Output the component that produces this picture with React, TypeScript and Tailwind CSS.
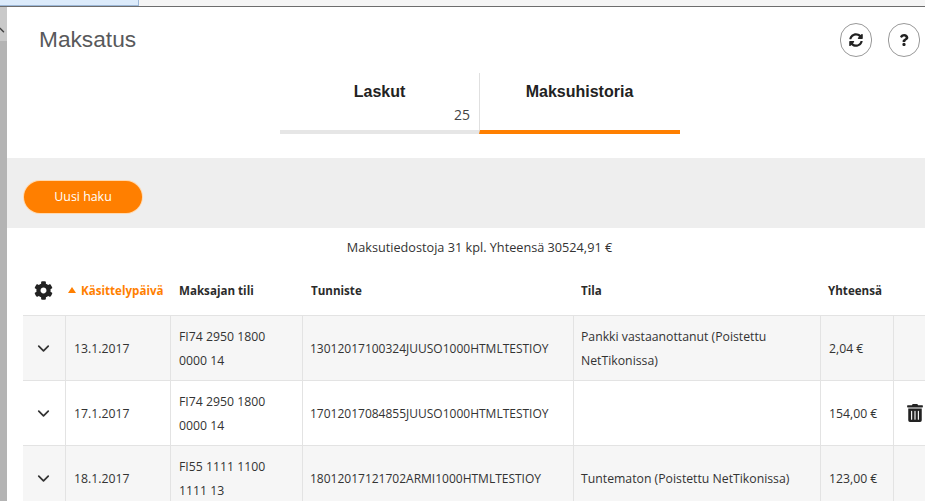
import { ChevronDown } from "lucide-react";
import { FaCog, FaQuestion, FaSyncAlt, FaTrashAlt } from "react-icons/fa";

const rows = [
  { date: "13.1.2017", account: ["FI74 2950 1800", "0000 14"], id: "13012017100324JUUSO1000HTMLTESTIOY", state: "Pankki vastaanottanut (Poistettu NetTikonissa)", sum: "2,04 €", trash: false },
  { date: "17.1.2017", account: ["FI74 2950 1800", "0000 14"], id: "17012017084855JUUSO1000HTMLTESTIOY", state: "", sum: "154,00 €", trash: true },
  { date: "18.1.2017", account: ["FI55 1111 1100", "1111 13"], id: "18012017121702ARMI1000HTMLTESTIOY", state: "Tuntematon (Poistettu NetTikonissa)", sum: "123,00 €", trash: false },
];

const cols = "grid grid-cols-[42px_105px_132px_271px_247px_73px_32px]";

export default function App() {
  return (
    <div className="flex h-[501px] w-[925px] flex-col overflow-hidden bg-white font-['Open_Sans',sans-serif] text-[#333]">
      <div className="h-[7px] shrink-0 border-b border-[#6d6d6d] bg-[#f5f5f5]">
        <div className="h-[6px] w-[139px] border-r border-b border-[#9db8d8] bg-[#dcebfb]" />
      </div>
      <div className="flex min-h-0 flex-1">
        <div className="w-[7px] shrink-0 bg-[#b4b4b4]">
          <div className="h-[34px] overflow-hidden bg-[#c9c9c9]">
            <ChevronDown className="relative -left-[7px] top-[16px] rotate-180 text-[#444]" size={14} strokeWidth={2.5} />
          </div>
        </div>
        <div className="min-w-0 flex-1">
          <div className="flex h-[66px] items-start justify-between pt-[16px] pr-[5px] pl-[32px]">
            <h1 className="font-['Liberation_Sans',sans-serif] text-[22.7px] leading-[32px] text-[#58595b]">Maksatus</h1>
            <div className="flex gap-[16px]">
              <button className="flex h-[34px] w-[32px] items-center justify-center rounded-full border border-[#999] text-[#222]">
                <FaSyncAlt size={14} />
              </button>
              <button className="flex h-[34px] w-[32px] items-center justify-center rounded-full border border-[#999] text-[#222]">
                <FaQuestion size={12} />
              </button>
            </div>
          </div>

          <div className="ml-[273px] flex h-[61px] w-[400px] font-['Liberation_Sans',sans-serif]">
            <div className="w-[199px] border-b-[4px] border-[#e6e6e6] pt-[10px]">
              <div className="text-center text-[16px] leading-[18px] font-bold text-[#222]">Laskut</div>
              <div className="mt-[4px] pr-[9px] text-right font-['Open_Sans',sans-serif] text-[14px] leading-[19px] text-[#444]">25</div>
            </div>
            <div className="w-[201px] border-b-[4px] border-l border-[#ff7f00] border-l-[#e0e0e0] pt-[10px]">
              <div className="pr-[1px] text-center text-[16px] leading-[18px] font-bold text-[#222]">Maksuhistoria</div>
            </div>
          </div>

          <div className="mt-[24px] flex h-[70px] items-start bg-[#eeeeee] pt-[23px] pl-[17px]">
            <button className="h-[32px] w-[118px] rounded-full bg-[#ff7f00] text-[12.4px] text-white shadow-[0_0_0_1px_#ffd9b0]">Uusi haku</button>
          </div>

          <div className="pt-[10px] pl-[27px] text-center text-[12.7px] leading-[19px] text-[#333]">Maksutiedostoja 31 kpl. Yhteensä 30524,91 €</div>

          <div className="mt-[14px] ml-[16px]">
            <div className={`${cols} h-[45px] items-center border-b border-[#e3e3e3] pb-[5px] text-[11.6px] font-bold text-[#2b2b2b]`}>
              <div className="flex justify-center pr-[1px]">
                <FaCog size={19} className="text-[#222]" />
              </div>
              <div className="flex items-center gap-[5px] pl-[3px] text-[#ff7f00]">
                <span className="h-0 w-0 border-x-[4px] border-b-[6px] border-x-transparent border-b-[#ff7f00]" />
                Käsittelypäivä
              </div>
              <div className="pl-[9px]">Maksajan tili</div>
              <div className="pl-[9px]">Tunniste</div>
              <div className="pl-[8px]">Tila</div>
              <div className="pl-[8px]">Yhteensä</div>
              <div />
            </div>
            {rows.map((row, i) => (
              <div key={row.date} className={`${cols} h-[65px] border-b border-[#e3e3e3] text-[12.25px] leading-[24px] text-[#333] ${i % 2 === 0 ? "bg-[#f6f6f6]" : "bg-white"}`}>
                <div className="flex items-center justify-center pr-[1px]">
                  <ChevronDown size={19} strokeWidth={2.2} className="text-[#333]" />
                </div>
                <div className="flex items-center border-l border-[#e3e3e3] pt-[1px] pl-[8px]">{row.date}</div>
                <div className="flex flex-col justify-center border-l border-[#e3e3e3] pt-[1px] pl-[8px]">
                  <span>{row.account[0]}</span>
                  <span>{row.account[1]}</span>
                </div>
                <div className="flex items-center border-l border-[#e3e3e3] pt-[1px] pl-[7px] text-[12px]">{row.id}</div>
                <div className="flex items-center border-l border-[#e3e3e3] pt-[1px] pr-[20px] pl-[7px]">{row.state}</div>
                <div className="flex items-center border-l border-[#e3e3e3] pt-[1px] pl-[8px]">{row.sum}</div>
                <div className="flex items-center justify-center border-l border-[#e3e3e3] pl-[11px]">
                  {row.trash && <FaTrashAlt size={18} className="shrink-0 text-[#222]" />}
                </div>
              </div>
            ))}
          </div>
        </div>
      </div>
    </div>
  );
}
